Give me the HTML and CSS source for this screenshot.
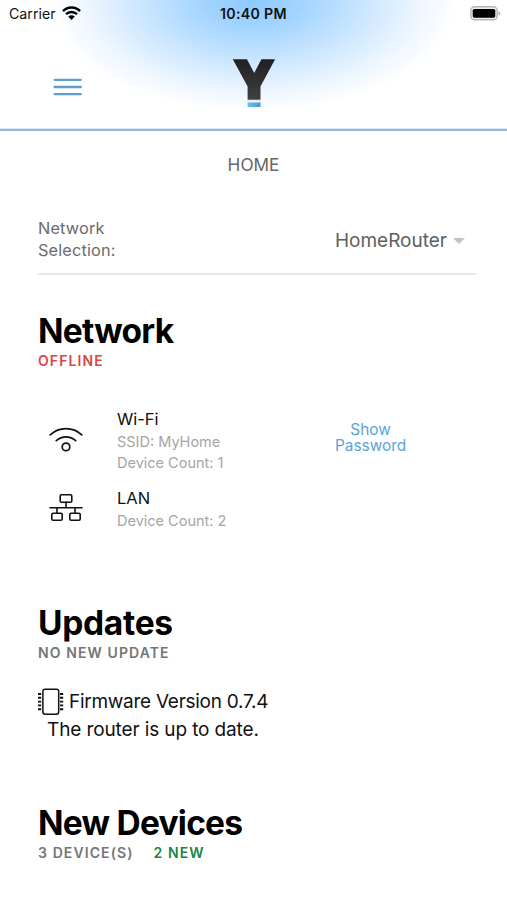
FILE: index.html
```html
<!DOCTYPE html>
<html lang="en">
<head>
<meta charset="utf-8">
<title>Home</title>
<link rel="stylesheet" href="styles.css">
</head>
<body>
<header class="header">
  <div class="status">
    <div class="carrier"><span>Carrier</span>
      <svg width="19" height="14" viewBox="0 0 19 14" fill="none" stroke="#000" stroke-width="2.5"><path d="M1 5.1C5.7.2 13.3.2 18 5.1M4 8.2c3.1-3.1 7.9-3.1 11 0"/><path d="M6.2 10.6c1.9-1.8 4.7-1.8 6.6 0L9.5 14z" fill="#000" stroke="none"/></svg>
    </div>
    <div class="time">10:40 PM</div>
    <svg class="battery" width="31" height="15" viewBox="0 0 31 15"><rect x=".8" y=".8" width="26.4" height="13" rx="3.8" fill="#eee" stroke="#b5b5b5" stroke-width="1.4"/><rect x="2.7" y="2.9" width="22.6" height="8.9" rx="1.7"/><path d="M28.6 5.2c2.2.8 2.2 3.4 0 4.2z" fill="#aaa"/></svg>
  </div>
  <div class="bar">
    <svg class="menu" width="30" height="20" viewBox="0 0 30 20" stroke="#5d9fd3" stroke-width="2.3" stroke-linecap="round"><path d="M2.6 2.8h26.2M2.6 10h26.2M2.6 17.1h26.2"/></svg>
    <svg class="logo" width="44" height="50" viewBox="0 0 44 50">
      <defs><linearGradient id="ink" x2="0" y2="1"><stop stop-color="#202022"/><stop offset="1" stop-color="#414040"/></linearGradient><linearGradient id="blue"><stop stop-color="#68c0ee"/><stop offset="1" stop-color="#4e94cf"/></linearGradient></defs>
      <path d="M.8 1.3h14.2l7.2 13.6 7.2-13.6h13.7L28.5 28.4v13.4H15.6V28.4z" fill="url(#ink)"/><path d="M15.6 42h13v2.4h-13z" fill="#e8eef3"/><path d="M15.6 44.5h13v4.5h-13z" fill="url(#blue)"/>
    </svg>
  </div>
</header>
<main class="content">
  <h1 class="page-title">HOME</h1>
  <div class="selection">
    <div class="selection-label">Network<br>Selection:</div>
    <div class="dropdown"><span>HomeRouter</span><i class="caret"></i></div>
  </div>
  <section class="network">
    <h2>Network</h2>
    <div class="sub offline">OFFLINE</div>
    <div class="connections">
      <div class="row wifi">
        <svg class="row-icon" width="34" height="30" viewBox="0 0 34 30" fill="none" stroke="#111" stroke-width="1.7" stroke-linecap="round"><path d="M1.2 9.8c9-8.3 22.6-8.3 31.6 0M7.3 15.7c5.8-5.2 13.6-5.2 19.4 0"/><circle cx="17" cy="21.9" r="3.8"/></svg>
        <div class="info"><div class="name">Wi-Fi</div><div class="detail ssid">SSID: MyHome</div><div class="detail">Device Count: 1</div></div>
        <a class="show">Show<br>Password</a>
      </div>
      <div class="row lan">
        <svg class="row-icon" width="34" height="30" viewBox="0 0 34 30" fill="none" stroke="#111" stroke-width="1.6" stroke-linecap="round"><rect x="11.2" y="1.8" width="11.6" height="7.4" rx="1.2"/><rect x="2.8" y="20.3" width="10.4" height="6.9" rx="1.2"/><rect x="20.8" y="20.3" width="10.4" height="6.9" rx="1.2"/><path d="M17 9.2v5.5M1 14.7h32M8 14.7v5.6M26 14.7v5.6"/></svg>
        <div class="info"><div class="name">LAN</div><div class="detail">Device Count: 2</div></div>
      </div>
    </div>
  </section>
  <section class="updates">
    <h2>Updates</h2>
    <div class="sub">NO NEW UPDATE</div>
    <div class="firmware">
      <svg width="27" height="28" viewBox="0 0 27 28" fill="none" stroke="#111"><rect x="5.9" y="1.2" width="15.8" height="25" rx="2.2" stroke-width="1.5"/><path d="M1 6h3.2M1 9.8h3.2M1 13.6h3.2M1 17.4h3.2M1 21.2h3.2M23 6h3.2M23 9.8h3.2M23 13.6h3.2M23 17.4h3.2M23 21.2h3.2" stroke-width="1.9"/></svg>
      <span>Firmware Version 0.7.4</span>
    </div>
    <p class="message">The router is up to date.</p>
  </section>
  <section class="devices">
    <h2>New Devices</h2>
    <div class="sub counts"><span>3 DEVICE(S)</span><span class="new">2 NEW</span></div>
  </section>
</main>
</body>
</html>
```

FILE: styles.css
```css
* { box-sizing: border-box; margin: 0; padding: 0; }
body { width: 507px; height: 900px; overflow: hidden; background: #fff; color: #111; font-family: Inter, sans-serif; }
svg { display: block; flex: none; }
.header { height: 131px; border-bottom: 2px solid #93b9da; box-shadow: inset 0 -1px #dbe8f4; background: radial-gradient(ellipse 204px 112px at 253px 0, #8ccaff 0%, #a3d4ff 25%, #cbe6ff 55%, #ebf5ff 80%, #fff 100%); }
.status { display: grid; grid-template-columns: 1fr 80px 1fr; align-items: center; height: 28px; padding: 0 6px 0 9px; font-size: 14.2px; line-height: 28px; }
.carrier { display: flex; align-items: center; gap: 6px; }
.carrier svg { margin-top: -2px; }
.time { margin-left: -3px; font-weight: 600; letter-spacing: .3px; text-align: center; }
.battery { justify-self: end; margin-top: -1px; }
.bar { display: grid; grid-template-columns: 180px 44px; padding: 30px 0 0 52px; }
.menu { margin-top: 19px; }
.content { padding: 23px 31px 0 38px; }
.page-title { margin-left: -7px; font-size: 17.2px; line-height: 22px; font-weight: 400; color: #666; text-align: center; }
.selection { display: flex; justify-content: space-between; align-items: flex-start; margin-top: 41px; height: 58px; border-bottom: 2px solid #e8e8e8; color: #6b6b6b; }
.selection-label { font-size: 16.3px; line-height: 22px; letter-spacing: .16px; }
.dropdown { display: flex; align-items: center; gap: 6px; padding-right: 11px; font-size: 19px; line-height: 47px; color: #606060; }
.caret { border: 6px solid transparent; border-top: 6px solid #c4c4c4; border-bottom: 0; }
h2 { font-size: 33.5px; line-height: 40px; font-weight: 700; color: #000; letter-spacing: -.75px; }
.updates h2 { letter-spacing: -.3px; }
.sub { font-size: 14px; line-height: 20px; font-weight: 600; letter-spacing: 1.1px; color: #757575; }
.network { padding-top: 36px; }
.offline { color: #d94747; }
.row { display: flex; align-items: flex-start; }
.row-icon { margin-left: 11px; }
.info { width: 218px; margin-left: 34px; }
.connections { margin-top: 38px; }
.wifi .row-icon { margin-top: 16px; }
.lan { margin-top: 15px; }
.name { font-size: 16.5px; line-height: 21px; }
.detail { font-size: 14.5px; line-height: 21px; color: #a5a5a5; }
.ssid { margin-top: 1px; }
.lan .detail { margin-top: 1px; }
.lan .row-icon { margin-top: 5px; }
.show { margin-top: 13px; font-size: 15.4px; line-height: 16px; color: #5ca3d9; text-align: center; }
.updates { padding-top: 72px; }
.firmware { display: flex; align-items: center; gap: 5px; margin: 25px 0 0 -1px; height: 28px; font-size: 19px; line-height: 28px; letter-spacing: -.27px; }
.message { margin-left: 9px; font-size: 19px; line-height: 28px; letter-spacing: -.12px; }
.devices { padding-top: 59px; }
.counts { display: flex; gap: 20px; }
.new { color: #208449; }
```
